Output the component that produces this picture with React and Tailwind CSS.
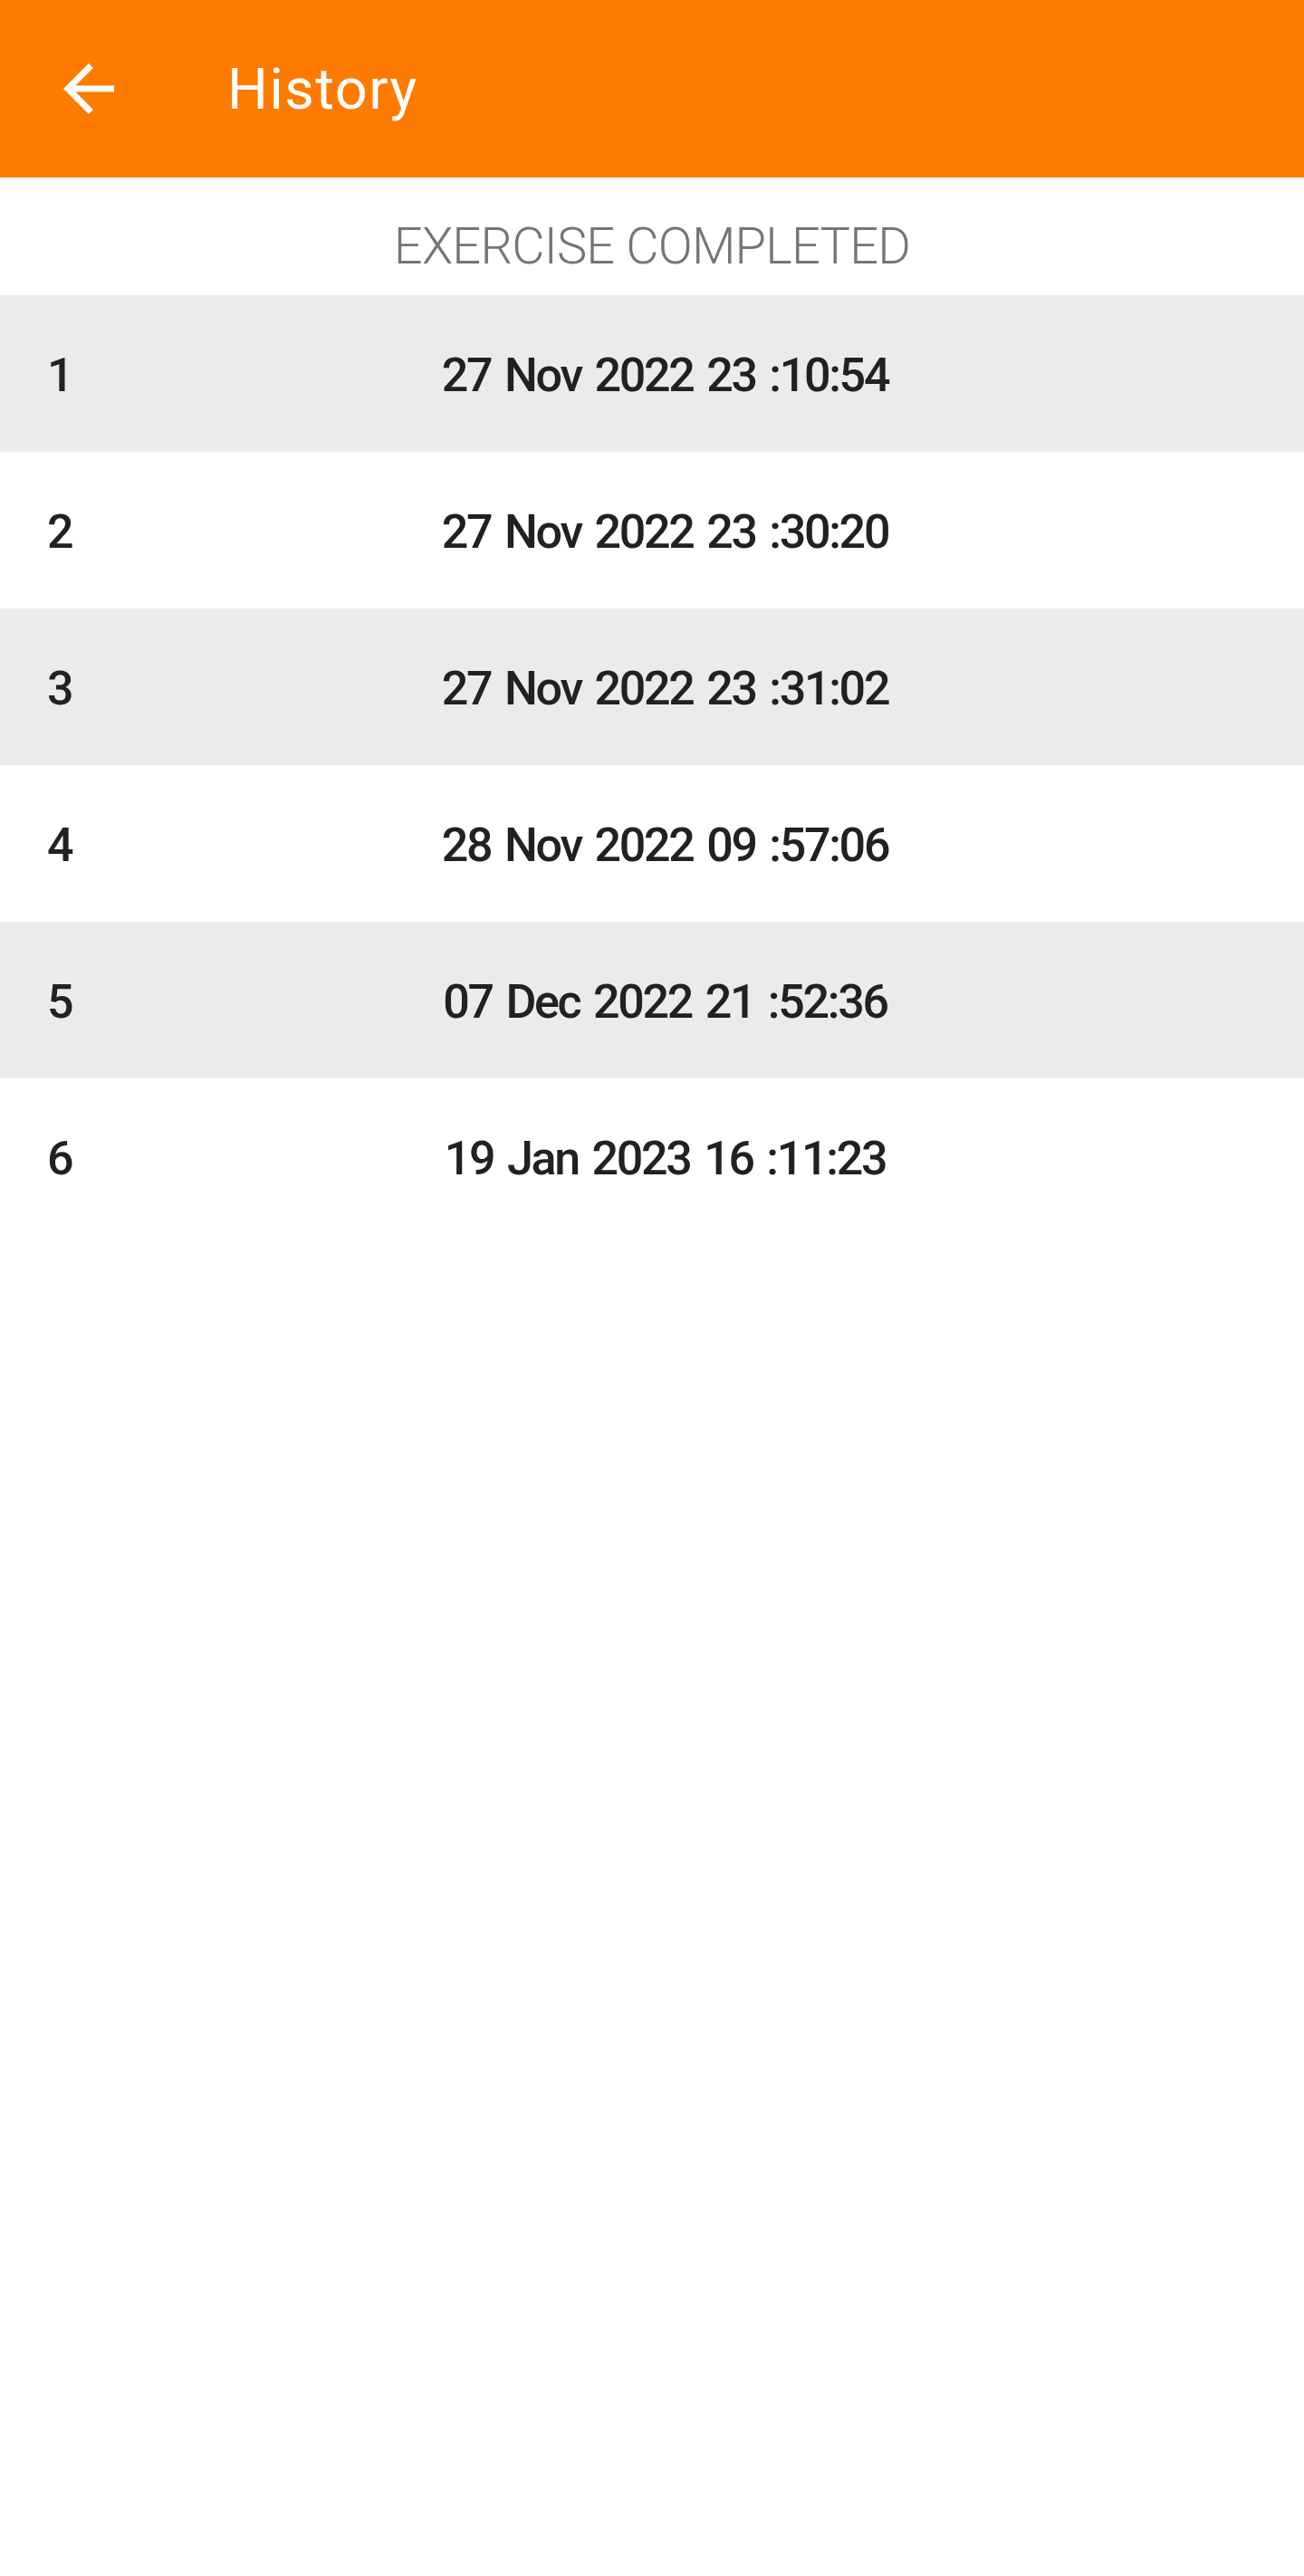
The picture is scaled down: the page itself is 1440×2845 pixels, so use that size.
import React from "react";

const rows = [
  "27 Nov 2022 23 :10:54",
  "27 Nov 2022 23 :30:20",
  "27 Nov 2022 23 :31:02",
  "28 Nov 2022 09 :57:06",
  "07 Dec 2022 21 :52:36",
  "19 Jan 2023 16 :11:23",
];

export default function App() {
  return (
    <div className="min-h-[2845px] w-full bg-white font-['Roboto','Liberation_Sans',sans-serif]">
      <header className="flex h-[196px] items-center bg-[#FF7B00] pl-[56px]">
        <svg viewBox="0 0 24 24" className="h-[84px] w-[84px] shrink-0" fill="#ffffff">
          <path d="M20 11H7.83l5.59-5.59L12 4l-8 8 8 8 1.41-1.41L7.83 13H20v-2z" />
        </svg>
        <h1 className="ml-[111px] text-[63px] font-normal leading-none tracking-[1.5px] text-white">History</h1>
      </header>

      <div className="flex h-[130px] items-center justify-center pt-[22px]">
        <span className="text-[56px] font-light leading-none tracking-[-0.8px] text-[#757575]">
          EXERCISE COMPLETED
        </span>
      </div>

      <ul>
        {rows.map((d, i) => (
          <li
            key={i}
            className={
              "flex h-[173px] items-center pt-[4px] text-[52px] font-medium leading-none text-[#212121] " +
              (i % 2 === 0 ? "bg-[#EBEBEB]" : "bg-white")
            }
          >
            <span className="w-[152px] shrink-0 pl-[52px]">{i + 1}</span>
            <span className="mr-[123px] flex-1 text-center tracking-[-2.3px] [word-spacing:4px]">{d}</span>
          </li>
        ))}
      </ul>
    </div>
  );
}
